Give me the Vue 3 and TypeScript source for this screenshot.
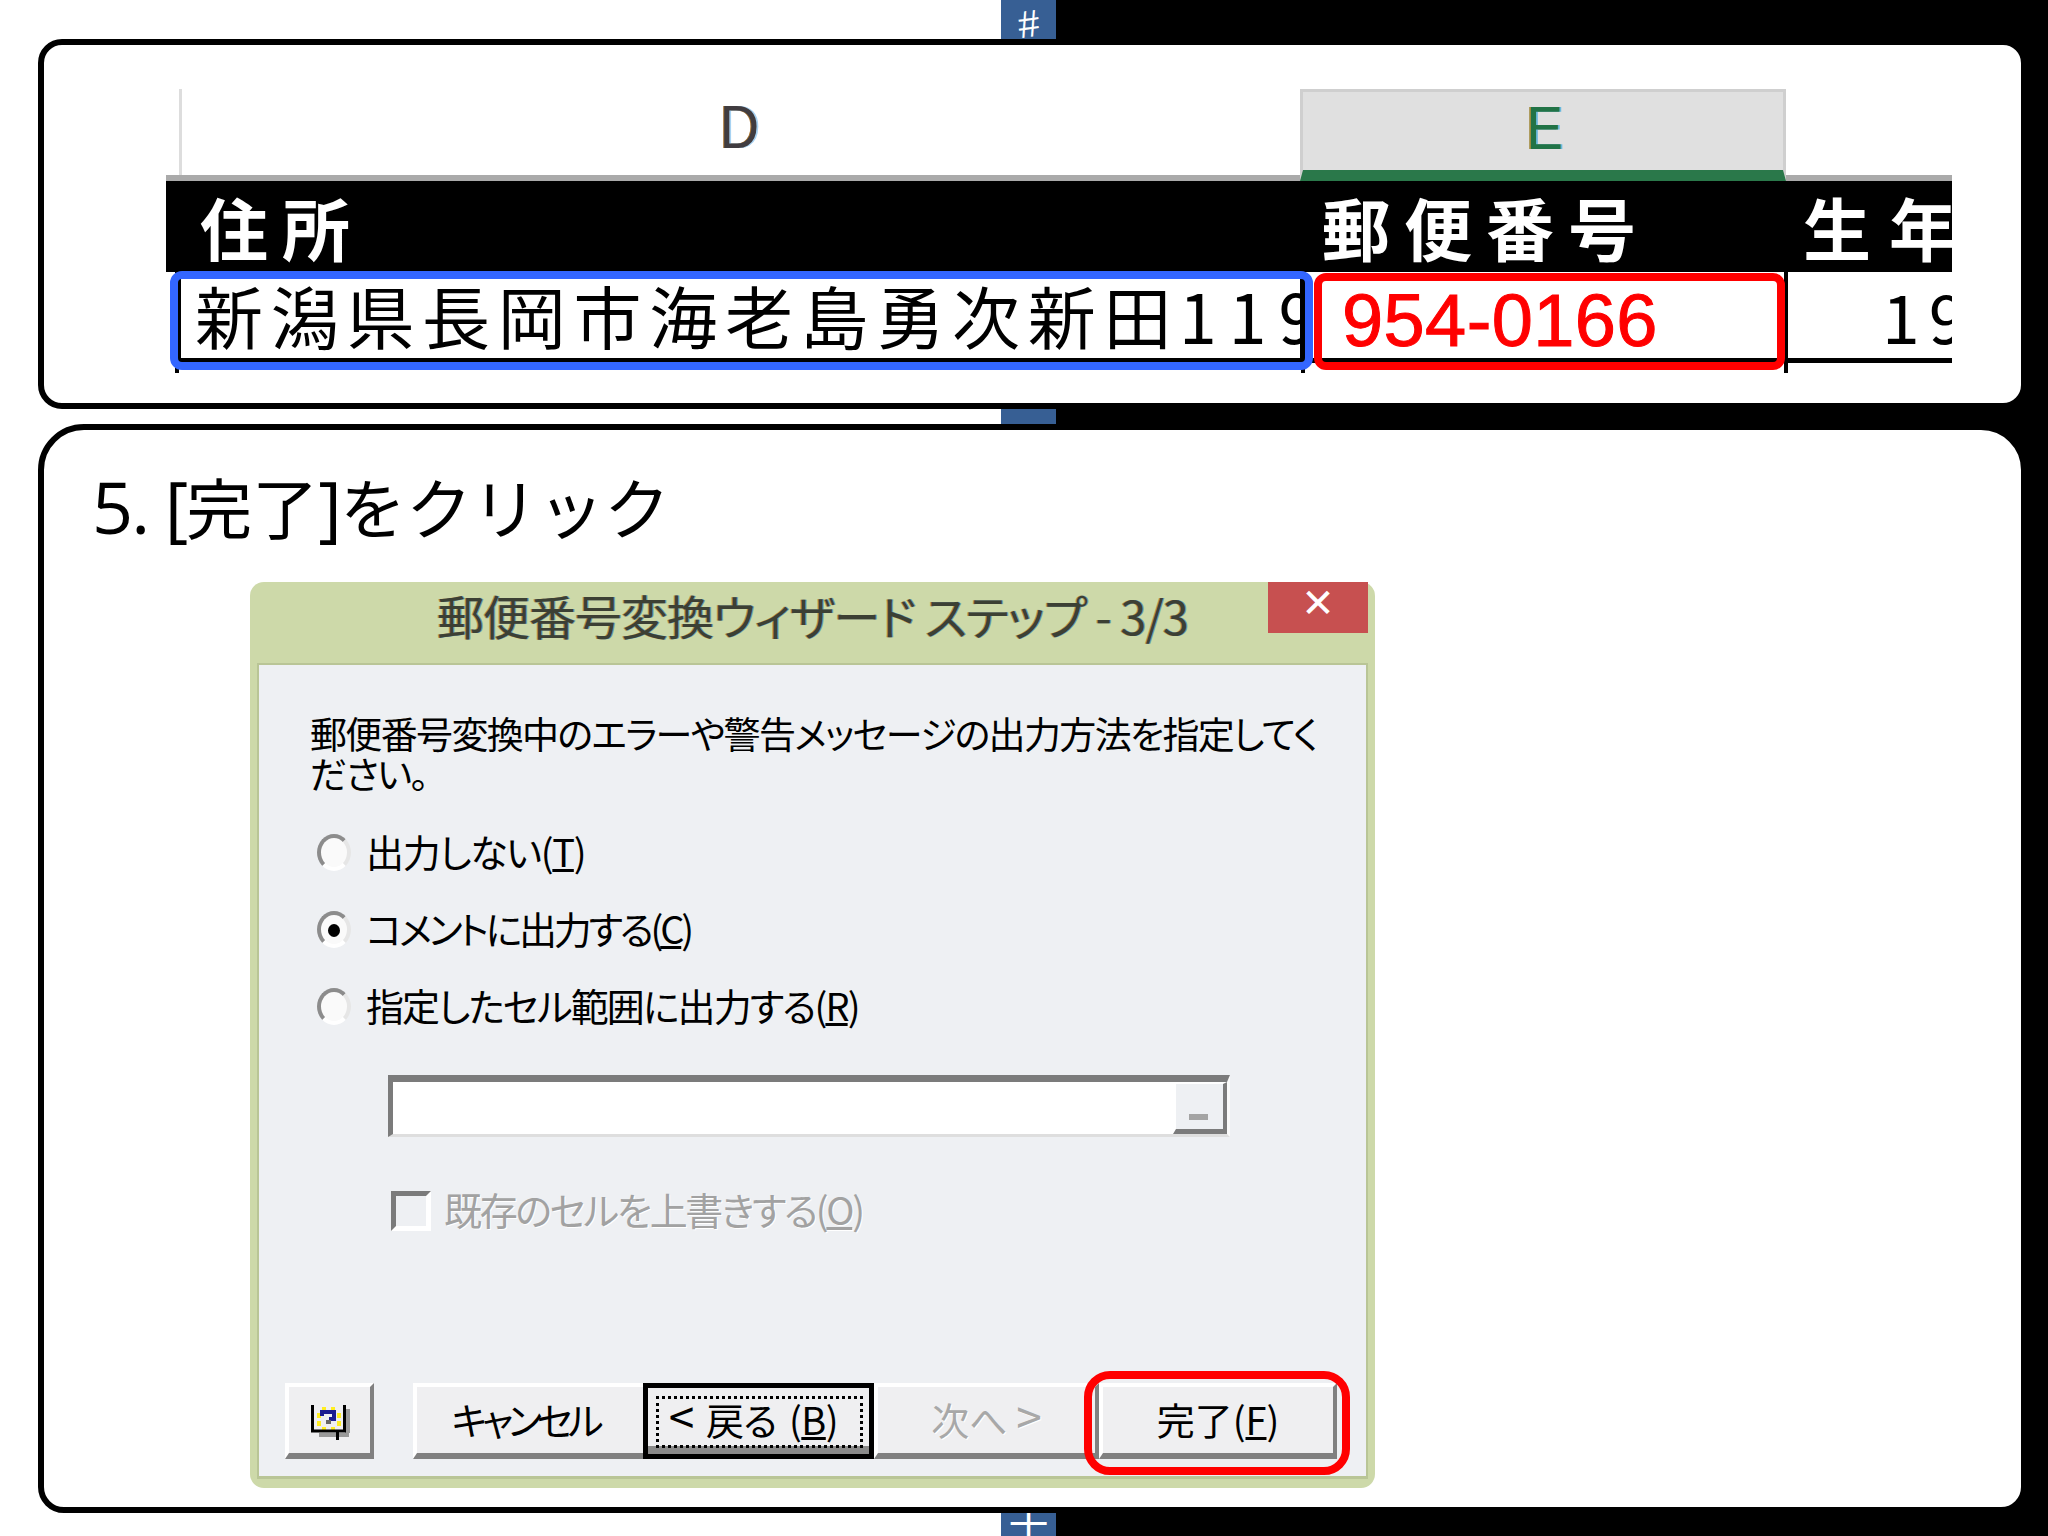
<script setup lang="ts">
const radios = [
  { text: '出力しない(', key: 'T', on: false, fit: 'fit-a' },
  { text: 'コメントに出力する(', key: 'C', on: true, fit: 'fit-b' },
  { text: '指定したセル範囲に出力する(', key: 'R', on: false, fit: 'fit-c' },
]
</script>

<template>
  <div class="page">
    <span class="strip-mark top">#</span>
    <section class="card first">
      <div class="sheet">
        <div class="col col-d"><span class="col-letter d">D</span></div>
        <div class="col col-e"><span class="col-letter e">E</span></div>
        <div class="col col-f"></div>

        <div class="head name">住所</div>
        <div class="head zip">郵便番号</div>
        <div class="head birth">生年</div>

        <div class="cell addr">新潟県長岡市海老島勇次新田<span class="num">119</span></div>
        <div class="cell post">954-0166</div>
        <div class="cell year">19</div>

        <i class="tick t1"></i>
        <i class="tick t2"></i>
        <i class="tick t3"></i>
        <div class="hl blue"></div>
        <div class="hl red"></div>
      </div>
    </section>

    <section class="card second">
      <h1 class="step"><span class="latin">5. [</span>完了<span class="latin">]</span>をクリック</h1>
      <div class="dialog">
        <header class="titlebar">
          <span class="title">郵便番号変換<span class="kana">ウィザード ステップ</span> - 3/3</span>
          <span class="close">✕</span>
        </header>
        <div class="body">
          <p class="msg">
            <span class="l1">郵便番号変換中のエラーや警告メッセージの出力方法を指定してく</span>
            <span class="l2">ださい。</span>
          </p>
          <div class="radios">
            <div v-for="r in radios" :key="r.key" class="radio-row">
              <span class="radio" :class="{ on: r.on }"></span>
              <span class="label" :class="r.fit">{{ r.text }}<u>{{ r.key }}</u>)</span>
            </div>
          </div>
          <div class="range">
            <div class="range-input"></div>
            <div class="range-btn"><i></i></div>
          </div>
          <div class="check-row">
            <span class="check"></span>
            <span class="label muted">既存のセルを上書きする(<u>O</u>)</span>
          </div>
          <footer class="buttons">
            <div class="btn help">
              <svg width="40" height="38" viewBox="0 0 40 38">
                <path d="M34 5h5v24h-5zM8 29h30v4H8z" fill="#999" />
                <g fill="#ffee22">
                  <rect x="11" y="3" width="4" height="4" /><rect x="20" y="3" width="4" height="4" />
                  <rect x="6" y="9" width="4" height="5" /><rect x="26" y="9" width="4" height="5" />
                  <rect x="6" y="17" width="4" height="5" /><rect x="26" y="17" width="4" height="5" />
                  <rect x="11" y="23" width="4" height="3" /><rect x="20" y="23" width="4" height="3" />
                </g>
                <path d="M1.5 1v26H33.5V1M26.5 27v9" fill="none" stroke="#000" stroke-width="3" />
                <path d="M11 12V8h12v7h-5" fill="none" stroke="#1c1c90" stroke-width="4" />
                <rect x="15" y="16" width="5" height="4" fill="#666" />
              </svg>
            </div>
            <div class="btn cancel"><span class="btn-text c">キャンセル</span></div>
            <div class="btn back">
              <span class="focus"><span class="btn-text b"><span class="chev">&lt;</span> 戻る (<u>B</u>)</span></span>
            </div>
            <div class="btn next"><span class="btn-text n">次へ <span class="chev">&gt;</span></span></div>
            <div class="btn finish"><span class="btn-text f">完了(<u>F</u>)</span></div>
          </footer>
          <div class="hl finish-mark"></div>
        </div>
      </div>
    </section>
    <span class="strip-mark bottom">十</span>
  </div>
</template>

<style scoped>
.page {
  position: relative;
  width: 2048px;
  height: 1536px;
  overflow: hidden;
  padding-top: 39px;
  box-sizing: border-box;
  background: linear-gradient(to right, #fff 1001px, #375f94 1001px, #375f94 1056px, #000 1056px);
  font-family: "Noto Sans CJK JP", sans-serif;
}
.strip-mark {
  position: absolute;
  left: 1001px;
  width: 55px;
  text-align: center;
  color: #fff;
  font-family: "Liberation Sans", sans-serif;
  overflow: hidden;
}
.strip-mark.top {
  top: 6px;
  height: 33px;
  font-size: 38px;
  line-height: 36px;
  transform: rotate(-8deg);
}
.strip-mark.bottom {
  top: 1513px;
  height: 23px;
  font-size: 40px;
  line-height: 20px;
  font-family: "Noto Sans CJK JP", sans-serif;
}
.card {
  margin-left: 38px;
  width: 1989px;
  box-sizing: border-box;
  background: #fff;
  border: 6px solid #000;
}
.first {
  height: 370px;
  border-radius: 24px;
  padding: 44px 0 0 122px;
}
.second {
  height: 1089px;
  margin-top: 15px;
  border-radius: 46px 46px 26px 26px;
  padding: 35px 0 0 48px;
}

/* spreadsheet */
.sheet {
  position: relative;
  display: grid;
  width: 1786px;
  grid-template-columns: 1134px 486px 166px;
  grid-template-rows: 92px 91px 91px;
  overflow: hidden;
  height: 284px;
  color: #000;
}
.col {
  box-sizing: border-box;
  display: flex;
  justify-content: center;
  align-items: center;
}
.col-d {
  border-bottom: 6px solid #aaa;
  padding: 0 0 10px 13px;
  background: linear-gradient(#ddd, #ddd) 13px 0 / 3px 100% no-repeat;
}
.col-e {
  background: #e0e0e0;
  border: 3px solid #cfcfcf;
  border-bottom: 11px solid #2a784a;
  padding-bottom: 0;
}
.col-f {
  border-bottom: 6px solid #aaa;
}
.col-letter {
  font-family: "Liberation Sans", sans-serif;
  font-size: 62px;
  line-height: 1;
}
.col-letter.d {
  color: #403c40;
  text-shadow: 2px 0 #a7d2f2, -1px 0 #a5702c;
  transform: scaleX(0.88);
}
.col-letter.e {
  color: #217346;
  margin: 0 0 0 4px;
  position: relative;
  top: -3px;
  text-shadow: 2px 0 #69b8dc, -2px 0 #a08a3c;
  transform: scaleX(0.88);
}
.head {
  background: #000;
  color: #fff;
  font-size: 68px;
  font-weight: 700;
  line-height: 91px;
  white-space: nowrap;
  overflow: hidden;
  letter-spacing: 8px;
}
.name { padding-left: 34px; letter-spacing: 14px; }
.zip { padding-left: 22px; letter-spacing: 14px; }
.birth { padding-left: 17px; letter-spacing: 18px; }
.cell {
  box-sizing: border-box;
  border-bottom: 5px solid #000;
  line-height: 86px;
  height: 91px;
  white-space: nowrap;
  overflow: hidden;
  font-size: 68px;
  letter-spacing: 7.7px;
}
.addr {
  margin-left: 12px;
  border-left: 3px solid #000;
  padding-left: 14px;
}
.num { letter-spacing: 12px; }
.post {
  border-left: 5px solid #000;
  padding-left: 37px;
  color: #f00;
  font-family: "Liberation Sans", sans-serif;
  font-size: 74px;
  line-height: 98px;
  letter-spacing: 0.4px;
  -webkit-text-stroke: 1px #f00;
}
.year {
  padding-left: 96px;
  letter-spacing: 9px;
}
.tick {
  position: absolute;
  top: 183px;
  width: 4px;
  height: 101px;
  background: #000;
}
.t1 { left: 9px; }
.t2 { left: 1135px; }
.t3 { left: 1618px; }
.hl {
  position: absolute;
  box-sizing: border-box;
}
.blue {
  left: 4px;
  top: 182px;
  width: 1143px;
  height: 99px;
  border: 8px solid #3366ff;
  border-radius: 12px;
}
.red {
  left: 1148px;
  top: 184px;
  width: 471px;
  height: 97px;
  border: 8px solid #f00;
  border-radius: 12px;
}

/* step heading */
.step {
  margin: 0;
  font-size: 66px;
  font-weight: 400;
  line-height: 80px;
  color: #000;
  white-space: nowrap;
}
.latin {
  font-family: "Open Sans", sans-serif;
  font-size: 72px;
  letter-spacing: -2px;
}

/* dialog */
.dialog {
  position: relative;
  box-sizing: border-box;
  margin: 36px 0 0 158px;
  width: 1125px;
  height: 906px;
  background: #cdd9a9;
  border-radius: 14px;
  padding: 0 7px 9px 7px;
  display: flex;
  flex-direction: column;
}
.titlebar {
  position: relative;
  height: 81px;
  flex: none;
  text-align: center;
}
.title {
  display: block;
  font-size: 47px;
  line-height: 66px;
  color: #3c4034;
  letter-spacing: -1px;
  white-space: nowrap;
  font-feature-settings: "palt";
  text-shadow: 1px 0 #6f9fb0, -1px 0 #b0924c;
}
.close {
  position: absolute;
  top: 0;
  right: 0;
  width: 100px;
  height: 51px;
  background: #c75050;
  color: #fff;
  font-family: "DejaVu Sans", sans-serif;
  font-size: 40px;
  font-weight: 700;
  text-align: center;
  line-height: 42px;
}
.body {
  position: relative;
  flex: 1;
  box-sizing: border-box;
  background: #eef0f3;
  border: 2px solid #b9c596;
  border-bottom: 3px solid #b9c596;
  padding: 48px 0 17px 51px;
  display: flex;
  flex-direction: column;
}
.msg {
  margin: 0;
  font-size: 37px;
  line-height: 40px;
  letter-spacing: -1.65px;
  color: #000;
  font-feature-settings: "palt";
  white-space: nowrap;
}
.msg span { display: block; }
.radios { margin-top: 21px; }
.radio-row {
  display: flex;
  align-items: center;
  height: 77px;
  margin-left: 7px;
  gap: 15px;
}
.radio {
  position: relative;
  box-sizing: border-box;
  flex: none;
  width: 34px;
  height: 37px;
  border-radius: 50%;
  background: #fafafa;
  border: 4px solid;
  border-color: #8c8c8c #e6e6e6 #fff #8c8c8c;
}
.radio.on::after {
  content: "";
  position: absolute;
  left: 7px;
  top: 9px;
  width: 12px;
  height: 13px;
  border-radius: 50%;
  background: #000;
}
.label {
  font-size: 38px;
  line-height: 46px;
  margin-top: -4px;
  color: #000;
  white-space: nowrap;
  font-feature-settings: "palt";
}
.fit-a { letter-spacing: -1.3px; }
.fit-b { letter-spacing: -3.2px; }
.fit-c { letter-spacing: -1.9px; }
u { text-underline-offset: 2px; text-decoration-thickness: 3px; }
.range {
  display: flex;
  margin: 30px 0 0 78px;
  width: 842px;
  height: 62px;
  box-sizing: border-box;
  border-top: 7px solid #7b7b7b;
  border-left: 5px solid #7b7b7b;
  border-right: 3px solid #fafafa;
  border-bottom: 3px solid #dedede;
  background: #fff;
}
.range-input { flex: 1; }
.range-btn {
  box-sizing: border-box;
  width: 54px;
  background: #eef0f3;
  border-top: 2px solid #fff;
  border-left: 3px solid #fff;
  border-right: 4px solid #7b7b7b;
  border-bottom: 5px solid #7b7b7b;
  position: relative;
}
.range-btn i {
  position: absolute;
  left: 13px;
  top: 30px;
  width: 19px;
  height: 6px;
  background: #a4a4a4;
}
.check-row {
  display: flex;
  align-items: center;
  margin: 54px 0 0 81px;
  height: 40px;
  gap: 13px;
}
.check {
  box-sizing: border-box;
  width: 40px;
  height: 40px;
  background: #eef0f3;
  border: 5px solid;
  border-color: #7b7b7b #fff #fff #7b7b7b;
}
.muted {
  color: #a2a2a2;
  letter-spacing: -2.3px;
  text-shadow: 1px 1px 0 #fff;
}
.buttons {
  display: flex;
  margin: auto 0 0 -25px;
  height: 76px;
}
.btn {
  box-sizing: border-box;
  height: 76px;
  background: #efeff1;
  border-top: 4px solid #fff;
  border-left: 4px solid #fff;
  border-right: 4px solid #808080;
  border-bottom: 6px solid #808080;
  display: flex;
  align-items: center;
  justify-content: center;
  flex: none;
}
.help { width: 89px; margin-right: 39px; }
.help svg { margin: 5px 0 0 2px; }
.cancel { width: 230px; border-right: 0; }
.back {
  width: 231px;
  border: 5px solid #000;
  padding: 8px 6px 6px 8px;
  background: linear-gradient(#efeff1 88%, #8a8a8a 88%);
}
.focus {
  flex: 1;
  align-self: stretch;
  display: flex;
  align-items: center;
  justify-content: center;
  border: 3px dotted #000;
}
.next { width: 225px; color: #a8a8a8; }
.finish { width: 238px; }
.btn-text {
  font-size: 38px;
  line-height: 46px;
  margin-top: -3px;
  white-space: nowrap;
  font-feature-settings: "palt";
}
.c { letter-spacing: -5px; margin-right: 10px; }
.b { word-spacing: 4px; margin: -7px 12px 0 0; letter-spacing: -0.5px; }
.chev { font-size: 46px; line-height: 40px; font-weight: 400; }
.n { color: #a8a8a8; text-shadow: 1px 1px 0 #fff; }
.finish-mark {
  right: 16px;
  bottom: 1px;
  width: 266px;
  height: 104px;
  border: 8px solid #f00;
  border-radius: 26px;
}
</style>
